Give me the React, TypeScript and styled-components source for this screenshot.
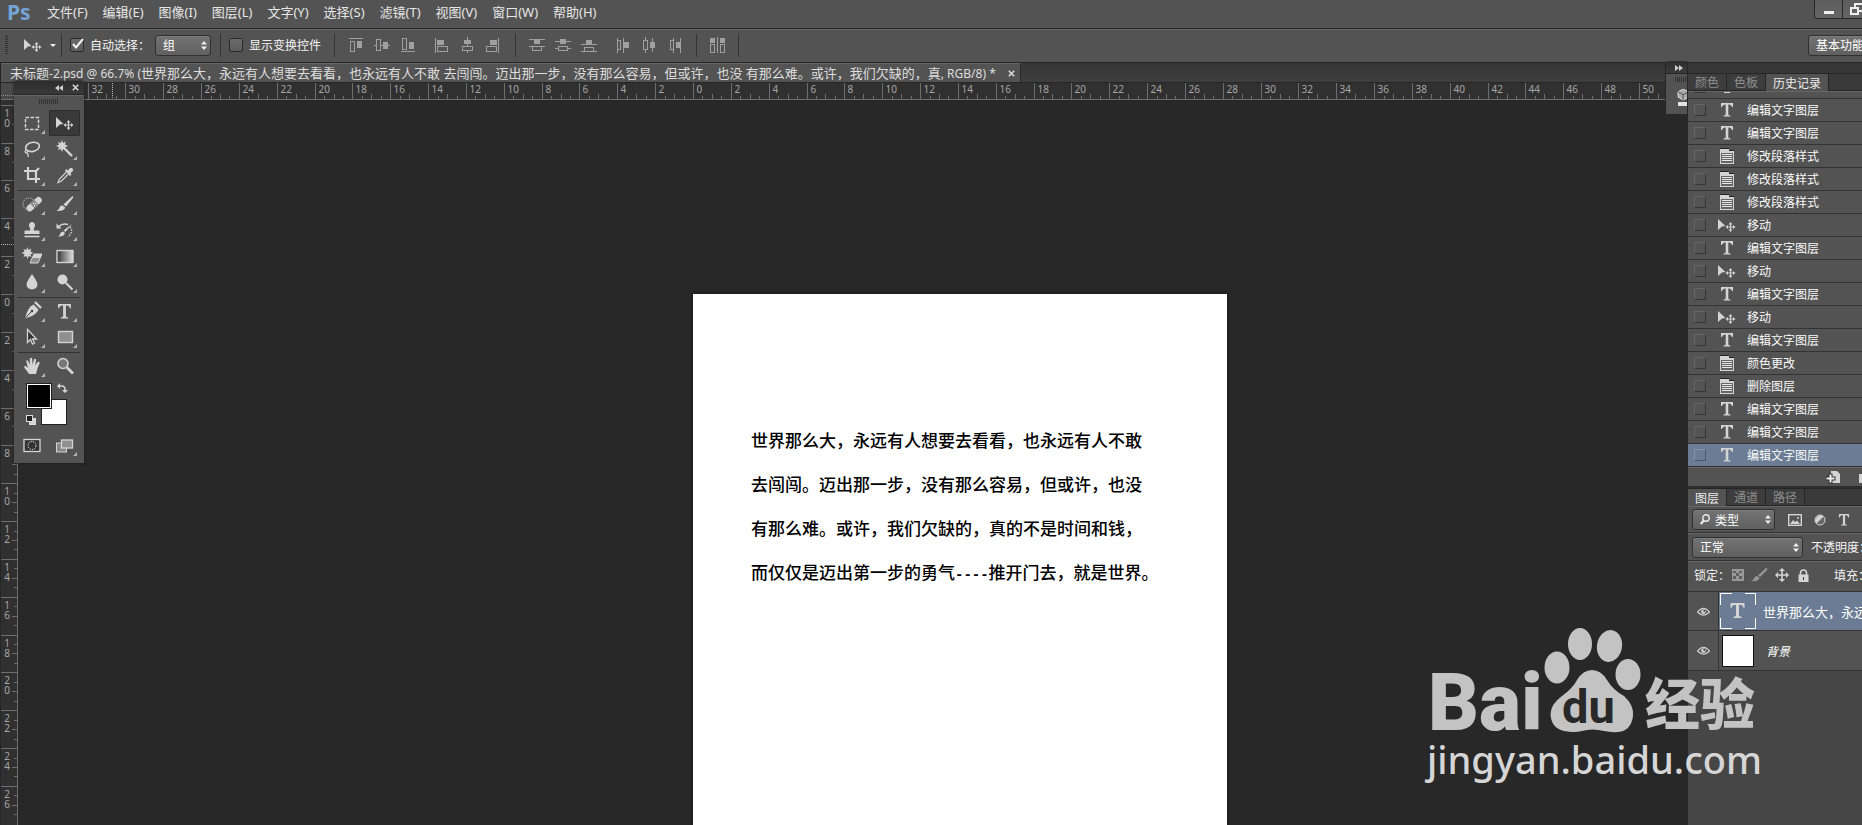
import React from "react";
import styled, { createGlobalStyle, css } from "styled-components";

const ui = `"Noto Sans", "Noto Sans CJK SC", sans-serif`;
const cjk = `"Noto Sans CJK SC", sans-serif`;

const c = {
  panel: "#535353",
  dark: "#282828",
  ruler: "#303030",
  tick: "#6e6e6e",
  line: "#333333",
  edge: "#262626",
  hi: "#666666",
  icon: "#d4d4d4",
  dim: "#989898",
  blue: "#6b7c94",
};

const Global = createGlobalStyle`
  *, *::before, *::after { box-sizing: border-box; }
  html, body { margin: 0; background: ${c.dark}; }
  body { font-family: ${ui}; font-size: 13px; color: #e6e6e6; overflow: hidden; }
  button, select, input { font: inherit; color: inherit; margin: 0; }
  button { padding: 0; border: 0; background: none; display: block; }
  ul { margin: 0; padding: 0; list-style: none; }
  svg { display: block; flex: none; }
`;

const Shell = styled.div`
  display: flex;
  flex-direction: column;
  height: 100vh;
  overflow: hidden;
  background: ${c.panel};
`;

/* ---------- menu bar ---------- */

const MenuBar = styled.header`
  display: flex;
  align-items: center;
  height: 29px;
  flex: none;
  padding-left: 7px;
  border-bottom: 1px solid ${c.edge};
  white-space: nowrap;
`;
const Logo = styled.span`
  width: 40px;
  height: 28px;
  font: 700 21px/25px "Noto Sans", sans-serif;
  color: #74a5d6;
`;
const MenuList = styled.nav`
  display: flex;
  gap: 15px;
  height: 28px;
`;
const MenuButton = styled.button`
  height: 28px;
  padding-bottom: 4px;
  line-height: 24px;
`;
const WindowControls = styled.div`
  display: flex;
  align-self: flex-start;
  width: 48px;
  height: 19px;
  margin-left: auto;
  overflow: hidden;
  border: 1px solid ${c.edge};
  border-width: 0 0 1px 1px;
  border-radius: 0 0 0 3px;
`;
const WindowButton = styled.button`
  flex: none;
  width: 28px;
  height: 18px;
  display: grid;
  place-items: center;
  background: linear-gradient(#5c5c5c, #656565);
  border-right: 1px solid ${c.edge};
`;

/* ---------- options bar ---------- */

const OptionsBar = styled.div`
  display: flex;
  align-items: center;
  height: 34px;
  flex: none;
  padding: 0 0 2px 5px;
  border-top: 1px solid ${c.hi};
  border-bottom: 1px solid ${c.edge};
  font-family: ${cjk};
  font-size: 12px;
  color: #f4f4f4;
  white-space: nowrap;
`;
const Grip = styled.i<{ $row?: boolean }>`
  display: block;
  flex: none;
  ${(p) =>
    p.$row
      ? css`
          width: 20px;
          height: 5px;
          background: repeating-linear-gradient(90deg, #333 0 1px, transparent 1px 2px);
        `
      : css`
          width: 3px;
          height: 20px;
          background: repeating-linear-gradient(#333 0 1px, transparent 1px 2px);
        `}
`;
const CurrentTool = styled.button`
  display: flex;
  align-items: center;
  gap: 8px;
  width: 53px;
  padding-left: 16px;
`;
const Divider = styled.i`
  flex: none;
  width: 1px;
  height: 23px;
  background: ${c.line};
`;
const Check = styled.label`
  display: flex;
  align-items: center;
  gap: 6px;
  margin-left: 8px;
  line-height: 20px;
`;
const CheckBox = styled.span`
  position: relative;
  width: 14px;
  height: 14px;
  input {
    appearance: none;
    display: block;
    width: 14px;
    height: 14px;
    border: 1px solid #2b2b2b;
    border-radius: 2px;
    background: linear-gradient(#6a6a6a, #5c5c5c);
  }
  svg {
    position: absolute;
    left: 1px;
    top: 0;
    pointer-events: none;
  }
`;
const SelectWrap = styled.span<{ $w: number }>`
  position: relative;
  flex: none;
  display: block;
  width: ${(p) => p.$w}px;
  height: 21px;
  svg {
    position: absolute;
    top: 6px;
    right: 4px;
    pointer-events: none;
  }
`;
const SelectBox = styled.select<{ $pad?: number }>`
  appearance: none;
  display: block;
  width: 100%;
  height: 21px;
  padding: 0 0 0 ${(p) => p.$pad ?? 7}px;
  border: 1px solid #303030;
  border-radius: 3px;
  box-shadow: inset 0 1px 0 #7c7c7c;
  background: linear-gradient(#737373, #606060);
  font: 12px/18px ${cjk};
  color: #fff;
`;
const SearchGlass = styled.svg`
  && {
    left: 8px;
    top: 5px;
  }
`;
const AlignGroup = styled.div<{ $lead: number }>`
  display: flex;
  margin-left: ${(p) => p.$lead}px;
`;
const AlignButton = styled.button`
  width: 26px;
  height: 20px;
  display: grid;
  place-items: center;
`;
const Workspace = styled.div`
  width: 54px;
  margin-left: auto;
  overflow: hidden;
`;

/* ---------- work area ---------- */

const Work = styled.div`
  flex: 1;
  min-height: 0;
  display: grid;
  grid-template-columns: minmax(0, 1fr) 175px;
`;
const DocArea = styled.main`
  position: relative;
  display: flex;
  flex-direction: column;
  min-width: 0;
  min-height: 0;
  border-left: 1px solid ${c.edge};
`;
const TabStrip = styled.div`
  display: flex;
  flex: none;
  height: 20px;
  background: linear-gradient(#353535, #3e3e3e);
  border-bottom: 1px solid ${c.edge};
`;
const DocTab = styled.div`
  display: flex;
  align-items: center;
  gap: 12px;
  padding: 0 4px 0 9px;
  background: ${c.panel};
  border-top: 1px solid ${c.hi};
  border-right: 1px solid #2a2a2a;
  line-height: 18px;
  white-space: nowrap;
  color: #dedede;
`;
const Latin = styled.span`
  font-size: 12px;
`;
const CloseButton = styled.button`
  width: 8px;
  height: 8px;
`;
const RulerRow = styled.div`
  display: flex;
  flex: none;
  height: 17px;
  background: ${c.ruler};
  border-bottom: 1px solid ${c.tick};
`;
const RulerCorner = styled.div`
  flex: none;
  width: 17px;
  height: 16px;
  padding-top: 12px;
  background: #4a4a4a;
  &::after {
    content: "";
    display: block;
    border-top: 1px dotted #8a8a8a;
  }
`;
const HRulerSvg = styled.svg`
  flex: 1;
  min-width: 0;
  height: 16px;
`;
const CanvasRow = styled.div`
  display: flex;
  flex: 1;
  min-height: 0;
`;
const VRulerSvg = styled.svg`
  width: 17px;
  height: 100%;
  background: ${c.ruler};
  border-right: 1px solid ${c.tick};
`;
const Canvas = styled.div`
  flex: 1;
  min-width: 0;
  overflow: hidden;
  padding: 194px 0 0 675px;
  background: ${c.dark};
`;
const Page = styled.article`
  width: 534px;
  height: 100%;
  padding: 124px 0 0 58px;
  background: #fff;
  color: #000;
  box-shadow: 0 0 4px #111;
  font: 500 17px/44px ${cjk};
  white-space: nowrap;
  p {
    margin: 0;
  }
`;
const Dashes = styled.span`
  font-family: "Liberation Mono", monospace;
  font-size: 14px;
  font-weight: 700;
`;

/* ---------- toolbox ---------- */

const Toolbox = styled.aside`
  position: absolute;
  left: 13px;
  top: 18px;
  width: 70px;
  padding-bottom: 5px;
  background: ${c.panel};
  border-radius: 3px 3px 0 0;
  box-shadow: 0 0 3px #1a1a1a;
`;
const ToolboxHead = styled.div`
  display: flex;
  justify-content: flex-end;
  align-items: center;
  gap: 9px;
  height: 14px;
  padding-right: 5px;
  border-radius: 3px 3px 0 0;
  background: linear-gradient(#2c2c2c, #3a3a3a);
  border-bottom: 1px solid ${c.edge};
`;
const GripRow = styled.div`
  display: grid;
  justify-content: center;
  height: 15px;
  padding-top: 3px;
  border-top: 1px solid ${c.hi};
`;
const ToolGrid = styled.div`
  display: grid;
  grid-template-columns: 33px 31px;
  column-gap: 1px;
  padding: 0 4px 0 1px;
`;
const ToolButton = styled.button<{ $on?: boolean }>`
  position: relative;
  height: 26px;
  display: grid;
  place-items: center;
  border-radius: 2px;
  ${(p) =>
    p.$on &&
    css`
      background: #393939;
      box-shadow: inset 0 0 0 1px #2c2c2c;
    `}
  &[data-more]::after {
    content: "";
    position: absolute;
    right: 3px;
    bottom: 2px;
    border: 2px solid #b4b4b4;
    border-top-color: transparent;
    border-left-color: transparent;
  }
`;
const ToolRule = styled.i`
  display: block;
  height: 1px;
  margin: 2px 4px 0;
  background: ${c.line};
`;
const Colors = styled.div`
  height: 53px;
  padding: 4px 0 0 12px;
`;

/* ---------- collapsed icon dock ---------- */

const IconDock = styled.aside`
  position: absolute;
  right: 0;
  top: -2px;
  width: 22px;
  height: 53px;
  overflow: hidden;
  background: ${c.panel};
  border-left: 1px solid ${c.edge};
  border-radius: 3px 0 0 0;
`;
const IconDockHead = styled.div`
  height: 13px;
  padding: 4px 0 0 9px;
  background: linear-gradient(#2e2e2e, #3a3a3a);
  border-bottom: 1px solid ${c.edge};
`;
const IconDockBody = styled.div`
  display: flex;
  flex-direction: column;
  gap: 7px;
  padding: 3px 0 0 9px;
`;

/* ---------- right dock ---------- */

const Dock = styled.aside`
  display: flex;
  flex-direction: column;
  min-width: 0;
  overflow: hidden;
  border-left: 1px solid ${c.edge};
  background: #464646;
  font-family: ${cjk};
  font-size: 12px;
  white-space: nowrap;
`;
const DockHead = styled.div`
  flex: none;
  height: 10px;
  background: #373737;
`;
const PanelTabs = styled.div`
  display: flex;
  flex: none;
  height: 18px;
  background: #3a3a3a;
  border-top: 1px solid ${c.edge};
  border-bottom: 1px solid ${c.edge};
`;
const PanelTab = styled.button<{ $on?: boolean }>`
  padding: 0 7px;
  height: ${(p) => (p.$on ? 17 : 16)}px;
  line-height: 16px;
  border-right: 1px solid ${c.edge};
  color: #8e8e8e;
  background: #3d3d3d;
  ${(p) =>
    p.$on &&
    css`
      color: #ececec;
      background: ${c.panel};
    `}
`;
const History = styled.ul`
  flex: none;
  background: ${c.panel};
  border-top: 1px solid ${c.hi};
`;
const HistoryPeek = styled.li`
  display: flex;
  gap: 18px;
  height: 7px;
  padding-left: 6px;
  border-bottom: 1px solid ${c.line};
  i {
    width: 12px;
    height: 1px;
    background: ${c.line};
  }
  i + i {
    width: 6px;
    background: ${c.icon};
  }
`;
const HistoryRow = styled.li<{ $on?: boolean }>`
  display: flex;
  align-items: center;
  height: 23px;
  padding: 0 0 0 6px;
  border-bottom: 1px solid ${c.line};
  color: #fafafa;
  background: ${(p) => (p.$on ? c.blue : "transparent")};
  input {
    appearance: none;
    width: 12px;
    height: 12px;
    border: 1px solid;
    border-color: ${(p) => (p.$on ? "#8593a8 #4b5869 #4b5869 #8593a8" : "#666 #363636 #363636 #666")};
  }
`;
const HistoryIcon = styled.span`
  display: grid;
  place-items: center;
  width: 41px;
`;
const HistoryLabel = styled.button`
  line-height: 20px;
`;
const HistoryFoot = styled.div`
  display: flex;
  flex: none;
  align-items: center;
  gap: 18px;
  height: 19px;
  padding-left: 138px;
  background: ${c.panel};
  border-top: 1px solid ${c.hi};
`;
const PanelGap = styled.i`
  flex: none;
  height: 2px;
  background: #2e2e2e;
`;
const Row = styled.div<{ $h: number; $bottom?: number }>`
  display: flex;
  flex: none;
  align-items: center;
  height: ${(p) => p.$h}px;
  padding: 0 0 ${(p) => p.$bottom ?? 0}px 4px;
  background: ${c.panel};
  border-top: 1px solid ${c.hi};
  border-bottom: 1px solid ${c.line};
  color: #f4f4f4;
`;
const FilterButtons = styled.div`
  display: flex;
  gap: 12px;
  margin-left: 13px;
`;
const FieldText = styled.span<{ $lead: number }>`
  flex: none;
  margin-left: ${(p) => p.$lead}px;
  line-height: 20px;
`;
const LockButtons = styled.div`
  display: flex;
  flex: none;
  align-items: center;
  gap: 7px;
  width: 82px;
  margin-left: 2px;
`;
const LayerList = styled.ul`
  flex: none;
  background: ${c.panel};
`;
const LayerRow = styled.li<{ $on?: boolean }>`
  display: flex;
  height: ${(p) => (p.$on ? 39 : 40)}px;
  border-bottom: 1px solid ${c.line};
  color: #fff;
`;
const EyeButton = styled.button`
  flex: none;
  display: grid;
  place-items: center;
  width: 31px;
  border-right: 1px solid ${c.line};
`;
const LayerBody = styled.div<{ $on?: boolean }>`
  display: flex;
  flex: 1;
  align-items: center;
  gap: ${(p) => (p.$on ? 7 : 12)}px;
  padding-left: ${(p) => (p.$on ? 1 : 3)}px;
  font-size: ${(p) => (p.$on ? 13 : 12)}px;
  background: ${(p) => (p.$on ? c.blue : "transparent")};
`;
const Thumb = styled.i`
  flex: none;
  width: 32px;
  height: 32px;
  border: 1px solid #111;
  background: #fff;
`;
const Italic = styled.em`
  font-style: italic;
`;

/* ---------- watermark ---------- */

const Watermark = styled.div`
  position: absolute;
  right: 100px;
  bottom: 34px;
  pointer-events: none;
  color: #c3c3c3;
  white-space: nowrap;
`;
const Brand = styled.div`
  display: flex;
  align-items: flex-end;
  height: 104px;
  padding-left: 1px;
`;
const Bai = styled.span`
  width: 116px;
  margin-bottom: 2px;
  font: 900 79px/56px Roboto, sans-serif;
`;
const Exp = styled.span`
  margin: 0 0 5px 4px;
  font: 900 55px/56px ${cjk};
`;
const Url = styled.div`
  padding-bottom: 6px;
  font: 500 38px/52px "Noto Sans", sans-serif;
  color: #d6d6d6;
`;

/* ---------- icons ---------- */

const FourWay = ({ x, y }: { x: number; y: number }) => (
  <path
    transform={`translate(${x} ${y})`}
    d="M0-5 2-2.500H.6V-.6H2.500V-2L5 0 2.500 2V.6H.6V2.500H2L0 5-2 2.500H-.6V.6H-2.500V2L-5 0-2.500-2V-.6H-.6V-2.500H-2Z"
    fill={c.icon}
  />
);
const MoveIcon = () => (
  <svg width="18" height="15" viewBox="0 0 18 15">
    <path d="M0 1 7.500 8 4 8.500 0 12Z" fill={c.icon} />
    <FourWay x={12.5} y={9} />
  </svg>
);
const TIcon = ({ s = 14 }: { s?: number }) => (
  <svg width={s} height={s} viewBox="0 0 14 14">
    <path d="M1 0H13V4H12Q11.500 1.500 9 1.500H8.300V11.500Q8.300 12.500 10.500 12.600V13.500H3.500V12.600Q5.700 12.500 5.700 11.500V1.500H5Q2.500 1.500 2 4H1Z" fill={c.icon} />
  </svg>
);
const DocIcon = () => (
  <svg width="14" height="16" viewBox="0 0 14 16" shapeRendering="crispEdges">
    <path d="M0 1H9V3H14V16H0Z" fill={c.icon} />
    <path d="M1 5H13V15H1Z" fill="#666" />
    <path d="M2 6.500H12M2 8.500H12M2 10.500H12M2 12.500H12" stroke="#e8e8e8" />
    <path d="M0 .5H9M9 2.500H14" stroke="#222" />
  </svg>
);
const Updown = () => (
  <svg width="6" height="9" viewBox="0 0 6 9">
    <path d="M3 0 6 3.500H0ZM3 9 6 5.500H0Z" fill="#f0f0f0" />
  </svg>
);
const XIcon = () => (
  <svg width="7" height="7" viewBox="0 0 7 7">
    <path d="M.8.8 6.200 6.200M6.200.8.8 6.200" stroke="#d8d8d8" strokeWidth="1.600" />
  </svg>
);
const Chevrons = ({ left }: { left?: boolean }) => (
  <svg width="8" height="6" viewBox="0 0 8 6">
    <path d={left ? "M4 0V6L0 3ZM8 0V6L4 3Z" : "M0 0V6L4 3ZM4 0V6L8 3Z"} fill="#d0d0d0" />
  </svg>
);

const L = "#a0a0a0";
const Solid = (p: { x: number; y: number; w: number; h: number }) => (
  <rect x={p.x} y={p.y} width={p.w} height={p.h} fill={L} stroke="none" />
);
const alignArt: Record<string, React.ReactNode> = {
  top: (<><path d="M1 1.500H15M2.500 4.500H6.500V14.500H2.500Z" /><Solid x={9} y={4} w={5} h={7} /></>),
  vmid: (<><path d="M2.500 2.500H6.500V13.500H2.500ZM0 8.500H2M7 8.500H16" /><Solid x={9} y={5} w={5} h={7} /></>),
  bottom: (<><path d="M1 14.500H15M2.500 1.500H6.500V12.500H2.500Z" /><Solid x={9} y={5} w={5} h={7} /></>),
  left: (<><path d="M2.500 1V16M4.500 9.500H14.500V14.500H4.500Z" /><Solid x={4} y={3} w={7} h={5} /></>),
  hmid: (<><path d="M8.500 0V9M8.500 14V16M3.500 9.500H13.500V13.500H3.500Z" /><Solid x={5} y={3} w={7} h={4} /></>),
  right: (<><path d="M13.500 1V16M1.500 9.500H11.500V14.500H1.500Z" /><Solid x={5} y={3} w={7} h={5} /></>),
  dTop: (<><path d="M0 2.500H16M0 9.500H16M3.500 10V13.500H12.500V10" /><Solid x={5} y={3} w={6} h={4} /></>),
  dMid: (<><path d="M0 4.500H16M0 11.500H4M12 11.500H16M3.500 9.500H12.500V13.500H3.500Z" /><Solid x={5} y={2} w={6} h={5} /></>),
  dBot: (<><path d="M0 7.500H16M0 14.500H16M3.500 14V10.500H12.500V14" /><Solid x={5} y={3} w={6} h={4} /></>),
  dLeft: (<><path d="M2.500 1V16M8.500 1V16M2.500 3.500H5.500V12.500H2.500" /><Solid x={9} y={5} w={5} h={6} /></>),
  dHmid: (<><path d="M4.500 0V3M4.500 13V16M2.500 3.500H6.500V12.500H2.500ZM11.500 1V15" /><Solid x={9} y={5} w={5} h={6} /></>),
  dRight: (<><path d="M6.500 1V16M13.500 1V16M6.500 3.500H3.500V12.500H6.500" /><Solid x={9} y={5} w={4} h={6} /></>),
  auto: (<><path d="M8.500 0V16M1.500 7.500H5.500V15.500H1.500ZM11.500 7.500H15.500V15.500H11.500Z" /><Solid x={1} y={1} w={5} h={5} /><Solid x={11} y={1} w={5} h={5} /></>),
};
const alignNames: Record<string, string> = {
  top: "顶对齐", vmid: "垂直居中对齐", bottom: "底对齐", left: "左对齐", hmid: "水平居中对齐", right: "右对齐",
  dTop: "按顶分布", dMid: "垂直居中分布", dBot: "按底分布", dLeft: "按左分布", dHmid: "水平居中分布", dRight: "按右分布", auto: "自动对齐",
};
const Aligns = ({ ids, lead }: { ids: string[]; lead: number }) => (
  <AlignGroup $lead={lead}>
    {ids.map((id) => (
      <AlignButton key={id} aria-label={alignNames[id]}>
        <svg width="17" height="16" viewBox="0 0 17 16" fill="none" stroke={L} shapeRendering="crispEdges">
          {alignArt[id]}
        </svg>
      </AlignButton>
    ))}
  </AlignGroup>
);

const Star = ({ x, y }: { x: number; y: number }) => (
  <path
    transform={`translate(${x} ${y})`}
    d="M0-6 1-3 3.800-4.500 3-1.500 6 0 3 1.200 4 4 1.200 3 0 6-1.200 3-4 4-3 1.200-6 0-3-1.300-4-4-1.200-3Z"
    fill={c.icon}
  />
);
const toolArt: Record<string, React.ReactNode> = {
  marquee: <rect x="3.500" y="4.500" width="13" height="12" fill="none" stroke={c.icon} strokeWidth="1.500" strokeDasharray="3.500 1.500" />,
  lasso: (<g fill="none" stroke={c.icon} strokeWidth="1.700"><ellipse cx="10.500" cy="8" rx="7" ry="4.500" transform="rotate(-12 10 8)" /><path d="M4 11Q2 13 4 14Q6 14 5 12M4.500 14Q7 15 6 18" strokeWidth="1.200" /></g>),
  wand: (<><Star x={7} y={7} /><path d="M9 9 17 17" stroke={c.icon} strokeWidth="2.400" /></>),
  crop: <path d="M6 2V14H18M2 6H14V18M14 6 17 3" fill="none" stroke={c.icon} strokeWidth="2.200" />,
  dropper: (<><path d="M11 4 13 5.500Q15.500 1.500 17.500 3.500T15.500 8L16.500 9.500 15 11 10 6Z" fill={c.icon} /><path d="M11 7.500 4.500 14 3 17.500 6.500 16 13 9.500" fill="none" stroke={c.icon} strokeWidth="1.200" /></>),
  heal: (<><circle cx="7" cy="10" r="6" fill="none" stroke={c.icon} strokeDasharray="1.200 1.200" /><rect x="3" y="7" width="18" height="6.500" rx="3" transform="rotate(-42 12 10)" fill={c.icon} /><rect x="9.500" y="7" width="5.500" height="6.500" transform="rotate(-42 12 10)" fill="#888" /><path d="M11 9.500h1M13 9.500h1M12 11.500h1" stroke="#fff" /></>),
  brush: (<><path d="M17.500 2Q19 2.500 17.500 4.500L11 12.500 8.500 10.500Z" fill={c.icon} /><path d="M7.500 11.500 10.300 13.500Q9 17.500 1.500 17Q4 15.500 4.500 13.500Q5.500 11 7.500 11.500Z" fill={c.icon} /></>),
  stamp: (<><path d="M10 2A3.200 3.200 0 0 1 12.500 7Q11.500 8.500 11.800 10.500H16.500Q17.500 10.500 17.500 11.500V14H2.500V11.500Q2.500 10.500 3.500 10.500H8.200Q8.500 8.500 7.500 7A3.200 3.200 0 0 1 10 2Z" fill={c.icon} /><path d="M2.500 16.500H17.500" stroke={c.icon} strokeWidth="1.600" /></>),
  history: (<><path d="M17 4 10.500 12 8.500 10.500ZM8 11.500 10 13Q9 17 3 16.500Q5 15.500 5.300 13.500Q6 11.500 8 11.500Z" fill={c.icon} /><path d="M4 6.500Q7 3 13 4.500" fill="none" stroke={c.icon} strokeWidth="1.600" /><path d="M1.500 3.500 6.500 8.500H1.500Z" fill={c.icon} /><path d="M15 7Q19 11 13 17" fill="none" stroke={c.icon} strokeWidth="1.400" strokeDasharray="1.500 1.300" /></>),
  eraser: (<><Star x={5.5} y={7} /><path d="M12 8H20L16 17H8Z" fill="#8f8f8f" stroke={c.icon} /><path d="M12 8H20L18 12H10.500Z" fill={c.icon} /></>),
  gradient: (<><defs><linearGradient id="tg"><stop offset="0" stopColor="#333" /><stop offset="1" stopColor="#ddd" /></linearGradient></defs><rect x="2" y="4.500" width="16" height="12" fill="url(#tg)" stroke={c.icon} strokeWidth="1.400" /></>),
  blur: <path d="M10 2Q15.500 10 15.500 12.500A5.500 5 0 0 1 4.500 12.500Q4.500 10 10 2Z" fill={c.icon} />,
  dodge: (<><circle cx="7.500" cy="7.500" r="5" fill={c.icon} /><path d="M11 11 17.500 17.500" stroke={c.icon} strokeWidth="2.200" /></>),
  pen: (<><path d="M11.500 3.500 16.500 8.500Q15 14 3 17.500Q6 5.500 11.500 3.500Z" fill={c.icon} /><path d="M13 1 19 7" stroke={c.icon} strokeWidth="2.400" /><path d="M3 17.500 9.500 10.500" stroke="#444" /><circle cx="10" cy="10" r="1.300" fill="#444" /></>),
  path: <path d="M5.500 2.500V15.500L8.500 12.500 10.500 17 12.500 16 10.500 12H14.500Z" fill="#333" stroke={c.icon} strokeWidth="1.300" />,
  shape: <rect x="3.500" y="4.500" width="14" height="11" fill="#8f8f8f" stroke={c.icon} strokeWidth="1.400" />,
  hand: <path d="M7 18Q5 15 2.500 12Q1.500 10 3 9.800Q4.500 10 6 12L4.300 5.500Q4.300 4 5.500 4.200Q6.300 4.500 7.800 9L7.800 3Q8 1.800 9 1.800Q10 1.800 10.200 3L10.600 8.800 12 3.500Q12.500 2.500 13.400 2.800Q14.200 3.200 14 4.200L13.200 9.500 15.500 6.200Q16.500 5.200 17.400 6Q18 6.800 17.400 7.800Q15.500 11.500 14 18Z" fill={c.icon} />,
  zoom: (<><circle cx="8" cy="7.500" r="5" fill="#777" stroke={c.icon} strokeWidth="1.600" /><path d="M12 11.500 18 17.500" stroke={c.icon} strokeWidth="2.800" /></>),
  mask: (<><rect x="2" y="4.500" width="16" height="12" fill="#333" stroke={c.icon} strokeWidth="1.300" /><circle cx="10" cy="10.500" r="4" fill="none" stroke="#fff" strokeDasharray="1.200 1.200" /></>),
  screen: (<><rect x="1.500" y="8" width="10" height="9" fill="#888" stroke={c.icon} /><rect x="6.500" y="5" width="11" height="8" fill="#8f8f8f" stroke={c.icon} strokeWidth="1.300" /></>),
};
const toolNames: Record<string, string> = {
  marquee: "矩形选框工具", move: "移动工具", lasso: "套索工具", wand: "魔棒工具", crop: "裁剪工具", dropper: "吸管工具",
  heal: "修复画笔工具", brush: "画笔工具", stamp: "仿制图章工具", history: "历史记录画笔工具", eraser: "橡皮擦工具",
  gradient: "渐变工具", blur: "模糊工具", dodge: "减淡工具", pen: "钢笔工具", type: "文字工具", path: "路径选择工具",
  shape: "矩形工具", hand: "抓手工具", zoom: "缩放工具", mask: "快速蒙版", screen: "屏幕模式",
};
const single = ["move", "zoom", "mask"];
const Tools = ({ ids }: { ids: string[] }) => (
  <ToolGrid>
    {ids.map((id) => (
      <ToolButton key={id} aria-label={toolNames[id]} $on={id === "move"} data-more={single.includes(id) ? undefined : ""}>
        {id === "move" ? <MoveIcon /> : id === "type" ? <TIcon s={15} /> : (
          <svg width="20" height="20" viewBox="0 0 20 20">{toolArt[id]}</svg>
        )}
      </ToolButton>
    ))}
  </ToolGrid>
);

/* ---------- rulers ---------- */

const STEP = 37.84;
const range = (a: number, b: number) => Array.from({ length: b - a + 1 }, (_, i) => a + i);

const HRuler = ({ zero }: { zero: number }) => (
  <HRulerSvg fill="#a6a6a6" fontSize="10" fontFamily="Noto Sans">
    {range(-16, 25).map((n) => {
      const at = (q: number) => Math.round(zero + (n + q / 4) * STEP) + 0.5;
      return (
        <g key={n}>
          <path d={`M${at(0)} 0V16M${at(1)} 13V16M${at(2)} 11V16M${at(3)} 13V16`} stroke={c.tick} />
          <text x={at(0) + 3} y="10">{Math.abs(n * 2)}</text>
        </g>
      );
    })}
    <path d="M94.500 0V16" stroke="#bbb" strokeDasharray="1 1" />
  </HRulerSvg>
);
const VRuler = ({ zero }: { zero: number }) => (
  <VRulerSvg fill="#a6a6a6" fontSize="10" fontFamily="Noto Sans" textAnchor="middle">
    {range(-5, 13).map((n) => {
      const at = (q: number) => Math.round(zero + (n + q / 4) * STEP) + 0.5;
      return (
        <g key={n}>
          <path d={`M0 ${at(0)}H16M13 ${at(1)}H16M11 ${at(2)}H16M13 ${at(3)}H16`} stroke={c.tick} />
          {String(Math.abs(n * 2)).split("").map((d, i) => (
            <text key={i} x="6" y={at(0) + 11 + i * 10}>{d}</text>
          ))}
        </g>
      );
    })}
    <path d="M0 144.500H16" stroke="#bbb" strokeDasharray="1 1" />
  </VRulerSvg>
);

/* ---------- data ---------- */

const menus = ["文件(F)", "编辑(E)", "图像(I)", "图层(L)", "文字(Y)", "选择(S)", "滤镜(T)", "视图(V)", "窗口(W)", "帮助(H)"];

type Kind = "text" | "doc" | "move";
const history: [Kind, string][] = [
  ["text", "编辑文字图层"],
  ["text", "编辑文字图层"],
  ["doc", "修改段落样式"],
  ["doc", "修改段落样式"],
  ["doc", "修改段落样式"],
  ["move", "移动"],
  ["text", "编辑文字图层"],
  ["move", "移动"],
  ["text", "编辑文字图层"],
  ["move", "移动"],
  ["text", "编辑文字图层"],
  ["doc", "颜色更改"],
  ["doc", "删除图层"],
  ["text", "编辑文字图层"],
  ["text", "编辑文字图层"],
  ["text", "编辑文字图层"],
];
const kindIcon: Record<Kind, React.ReactNode> = { text: <TIcon />, doc: <DocIcon />, move: <MoveIcon /> };

const Eye = () => (
  <svg width="13" height="9" viewBox="0 0 13 9">
    <path d="M.5 5Q6.500-2.500 12.500 5Q6.500 11 .5 5Z" fill="none" stroke={c.icon} strokeWidth="1.200" />
    <circle cx="6.500" cy="4.600" r="2.400" fill={c.icon} />
    <circle cx="7.200" cy="4" r=".9" fill="#333" />
  </svg>
);

export default function App() {
  return (
    <Shell>
      <Global />
      <MenuBar>
        <Logo>Ps</Logo>
        <MenuList>
          {menus.map((m) => (
            <MenuButton key={m}>{m}</MenuButton>
          ))}
        </MenuList>
        <WindowControls>
          <WindowButton aria-label="最小化">
            <svg width="10" height="12"><path d="M0 8H10V11H0Z" fill="#f0f0f0" /></svg>
          </WindowButton>
          <WindowButton aria-label="还原">
            <svg width="14" height="12" fill="none" stroke="#eee" strokeWidth="2">
              <path d="M5 4V1H13V8H9M1 5H8V11H1Z" />
            </svg>
          </WindowButton>
        </WindowControls>
      </MenuBar>

      <OptionsBar>
        <Grip />
        <CurrentTool aria-label="移动工具">
          <MoveIcon />
          <svg width="6" height="3"><path d="M0 0H6L3 3Z" fill="#eee" /></svg>
        </CurrentTool>
        <Divider />
        <Check>
          <CheckBox>
            <input type="checkbox" defaultChecked />
            <svg width="14" height="12" viewBox="0 0 14 12"><path d="M2 6 5 9.500 12 1" fill="none" stroke="#f2f2f2" strokeWidth="2" /></svg>
          </CheckBox>
          自动选择：
        </Check>
        <AlignGroup $lead={5}>
          <SelectWrap $w={56}>
            <SelectBox aria-label="自动选择"><option>组</option></SelectBox>
            <Updown />
          </SelectWrap>
        </AlignGroup>
        <AlignGroup $lead={9}><Divider /></AlignGroup>
        <Check>
          <CheckBox><input type="checkbox" /></CheckBox>
          显示变换控件
        </Check>
        <AlignGroup $lead={13}><Divider /></AlignGroup>
        <Aligns lead={8} ids={["top", "vmid", "bottom"]} />
        <Aligns lead={7} ids={["left", "hmid", "right"]} />
        <AlignGroup $lead={9}><Divider /></AlignGroup>
        <Aligns lead={8} ids={["dTop", "dMid", "dBot"]} />
        <Aligns lead={8} ids={["dLeft", "dHmid", "dRight"]} />
        <AlignGroup $lead={8}><Divider /></AlignGroup>
        <Aligns lead={7} ids={["auto"]} />
        <AlignGroup $lead={8}><Divider /></AlignGroup>
        <Workspace>
          <SelectWrap $w={110}>
            <SelectBox aria-label="工作区"><option>基本功能</option></SelectBox>
          </SelectWrap>
        </Workspace>
      </OptionsBar>

      <Work>
        <DocArea>
          <TabStrip>
            <DocTab>
              <span>
                未标题<Latin>-2.psd @ 66.7% (</Latin>
                世界那么大，永远有人想要去看看，也永远有人不敢 去闯闯。迈出那一步，没有那么容易，但或许，也没 有那么难。或许，我们欠缺的，真
                <Latin>, RGB/8) *</Latin>
              </span>
              <CloseButton aria-label="关闭"><XIcon /></CloseButton>
            </DocTab>
          </TabStrip>
          <RulerRow>
            <RulerCorner />
            <HRuler zero={675} />
          </RulerRow>
          <CanvasRow>
            <VRuler zero={194} />
            <Canvas>
              <Page>
                <p>世界那么大，永远有人想要去看看，也永远有人不敢</p>
                <p>去闯闯。迈出那一步，没有那么容易，但或许，也没</p>
                <p>有那么难。或许，我们欠缺的，真的不是时间和钱，</p>
                <p>而仅仅是迈出第一步的勇气<Dashes>----</Dashes>推开门去，就是世界。</p>
              </Page>
            </Canvas>
          </CanvasRow>

          <Toolbox>
            <ToolboxHead>
              <button aria-label="折叠"><Chevrons left /></button>
              <button aria-label="关闭工具栏"><XIcon /></button>
            </ToolboxHead>
            <GripRow><Grip $row /></GripRow>
            <Tools ids={["marquee", "move", "lasso", "wand", "crop", "dropper"]} />
            <ToolRule />
            <Tools ids={["heal", "brush", "stamp", "history", "eraser", "gradient", "blur", "dodge"]} />
            <ToolRule />
            <Tools ids={["pen", "type", "path", "shape"]} />
            <ToolRule />
            <Tools ids={["hand", "zoom"]} />
            <Colors>
              <svg width="44" height="44" viewBox="0 0 44 44" shapeRendering="crispEdges">
                <rect x="15.500" y="16.500" width="25" height="25" fill="#fff" stroke="#222" />
                <rect x=".5" y=".5" width="25" height="25" fill="#fff" stroke="#222" />
                <rect x="2" y="2" width="22" height="22" fill="#000" />
                <rect x="3.500" y="35.500" width="6" height="6" fill={c.icon} stroke="#ddd" />
                <rect x=".5" y="32.500" width="6" height="6" fill="#222" stroke="#ddd" />
                <g shapeRendering="auto">
                  <path d="M34 3H36Q39 3 39 7V8" fill="none" stroke={c.icon} strokeWidth="1.500" />
                  <path d="M34 0V6L31 3ZM36 7H42L39 10Z" fill={c.icon} />
                </g>
              </svg>
            </Colors>
            <Tools ids={["mask", "screen"]} />
          </Toolbox>

          <IconDock>
            <IconDockHead><Chevrons /></IconDockHead>
            <IconDockBody>
              <Grip $row />
              <svg width="24" height="20" viewBox="0 0 24 20">
                <path d="M8 0 14 3V8L8 11 3 8V3Z" fill="#aaa" stroke="#ddd" />
                <path d="M3 3 8 5.500 14 3M8 5.500V11" fill="none" stroke="#555" />
                <path d="M3 13H24V17H3Z" fill="#e4e4e4" />
              </svg>
            </IconDockBody>
          </IconDock>
        </DocArea>

        <Dock>
          <DockHead />
          <PanelTabs>
            <PanelTab>颜色</PanelTab>
            <PanelTab>色板</PanelTab>
            <PanelTab $on>历史记录</PanelTab>
          </PanelTabs>
          <History>
            <HistoryPeek><i /><i /></HistoryPeek>
            {history.map(([kind, label], i) => (
              <HistoryRow key={i} $on={i === history.length - 1}>
                <input type="checkbox" aria-label={`历史画笔源 ${i + 1}`} />
                <HistoryIcon>{kindIcon[kind]}</HistoryIcon>
                <HistoryLabel>{label}</HistoryLabel>
              </HistoryRow>
            ))}
          </History>
          <HistoryFoot>
            <button aria-label="新建文档">
              <svg width="15" height="13" viewBox="0 0 15 13">
                <path d="M5 0H11L14 3V12H5Z" fill={c.icon} />
                <path d="M4.500 2.500V12.500M0 7.500H9.500" stroke="#333" strokeWidth="4" />
                <path d="M4.500 3.500V11.500M.5 7.500H8.500" stroke="#eee" strokeWidth="2" />
              </svg>
            </button>
            <button aria-label="新建快照">
              <svg width="14" height="11" viewBox="0 0 14 11"><path d="M0 2H3L4 0H9L10 2H14V11H0Z" fill={c.icon} /></svg>
            </button>
          </HistoryFoot>
          <PanelGap />
          <PanelTabs>
            <PanelTab $on>图层</PanelTab>
            <PanelTab>通道</PanelTab>
            <PanelTab>路径</PanelTab>
          </PanelTabs>
          <Row $h={27}>
            <SelectWrap $w={83}>
              <SelectBox $pad={22} aria-label="图层过滤"><option>类型</option></SelectBox>
              <Updown />
              <SearchGlass width="10" height="11" viewBox="0 0 10 11">
                <circle cx="6" cy="4" r="3.200" fill="none" stroke="#eee" strokeWidth="1.400" />
                <path d="M3.800 6.500.8 10" stroke="#eee" strokeWidth="2" />
              </SearchGlass>
            </SelectWrap>
            <FilterButtons>
              <button aria-label="像素图层">
                <svg width="14" height="12" viewBox="0 0 14 12">
                  <rect x=".7" y=".7" width="12.600" height="10.600" fill="none" stroke={c.icon} strokeWidth="1.400" />
                  <path d="M2 10 5 6 7 8 9 6.500 12 10Z" fill={c.icon} /><circle cx="10" cy="4" r="1" fill={c.icon} />
                </svg>
              </button>
              <button aria-label="调整图层">
                <svg width="12" height="12" viewBox="0 0 12 12">
                  <circle cx="6" cy="6" r="5" fill="#666" stroke={c.icon} /><path d="M2.500 9.500A5 5 0 0 1 9.500 2.500Z" fill={c.icon} />
                </svg>
              </button>
              <button aria-label="文字图层"><TIcon s={12} /></button>
            </FilterButtons>
          </Row>
          <Row $h={28}>
            <SelectWrap $w={111}>
              <SelectBox aria-label="混合模式"><option>正常</option></SelectBox>
              <Updown />
            </SelectWrap>
            <FieldText $lead={8}>不透明度：</FieldText>
          </Row>
          <Row $h={31} $bottom={3}>
            <FieldText $lead={2}>锁定：</FieldText>
            <LockButtons>
              <button aria-label="锁定透明像素">
                <svg width="12" height="12" viewBox="0 0 12 12" shapeRendering="crispEdges">
                  <path d="M0 0H12V12H0Z" fill={c.dim} />
                  <path d="M1 2h3v2h-3zM7 2h3v2h-3zM4 4h3v3h-3zM1 7h3v3h-3zM7 7h3v3h-3z" fill="#606060" />
                </svg>
              </button>
              <button aria-label="锁定图像像素">
                <svg width="17" height="14" viewBox="0 0 17 14">
                  <path d="M15 0Q17 0 16 2L9 9 7 7.500ZM6 8 8.500 10Q7 14 0 13Q3 12 3.500 9.500Q4.500 8 6 8Z" fill={c.dim} />
                </svg>
              </button>
              <button aria-label="锁定位置">
                <svg width="14" height="14" viewBox="0 0 14 14">
                  <path transform="translate(7 7)" d="M0-7 3-4H.8V-.8H4V-3L7 0 4 3V.8H.8V4H3L0 7-3 4H-.8V.8H-4V3L-7 0-4-3V-.8H-.8V-4H-3Z" fill={c.icon} />
                </svg>
              </button>
              <button aria-label="锁定全部">
                <svg width="14" height="13" viewBox="0 0 14 13">
                  <path d="M4.500 6V4A3 3 0 0 1 10.500 4V6" fill="none" stroke={c.icon} strokeWidth="1.600" />
                  <path d="M2.500 5.500H12.500V13H2.500Z" fill={c.icon} /><path d="M7 8H8V11H7Z" fill="#333" />
                </svg>
              </button>
            </LockButtons>
            <FieldText $lead={20}>填充：</FieldText>
          </Row>
          <LayerList>
            <LayerRow $on>
              <EyeButton aria-label="隐藏文字图层"><Eye /></EyeButton>
              <LayerBody $on>
                <svg width="36" height="36" viewBox="0 0 36 36">
                  <path d="M12 .5H.5V12M25 .5H35.500V12M35.500 25V35.500H25M12 35.500H.5V25" fill="none" stroke="#fff" />
                  <path transform="translate(9.500 10)" d="M1 0H15V5H14Q13.500 2 11 2H9.500V12.500Q9.500 13.500 12 13.700V15H4V13.700Q6.500 13.500 6.500 12.500V2H5Q2.500 2 2 5H1Z" fill={c.icon} />
                </svg>
                世界那么大，永远
              </LayerBody>
            </LayerRow>
            <LayerRow>
              <EyeButton aria-label="隐藏背景"><Eye /></EyeButton>
              <LayerBody>
                <Thumb />
                <Italic>背景</Italic>
              </LayerBody>
            </LayerRow>
          </LayerList>
        </Dock>
      </Work>

      <Watermark>
        <Brand>
          <Bai>Bai</Bai>
          <svg width="97" height="105" viewBox="0 0 97 105" fill="#c3c3c3">
            <ellipse cx="13" cy="39.500" rx="12.500" ry="16" />
            <ellipse cx="36" cy="16" rx="12" ry="16" />
            <ellipse cx="65.500" cy="18" rx="12.500" ry="16" transform="rotate(10 65.500 18)" />
            <ellipse cx="84" cy="46.500" rx="12.500" ry="15.500" />
            <path d="M48 42Q57 42 63 52T80 68Q90 77 89 88Q87 103 74 104Q67 104.500 60 103Q48 100 38 103Q30 105 20 103Q7 100 6.500 86Q7 76 18 68T33 52Q39 42 48 42Z" />
            <text x="18" y="95" fontFamily="Roboto" fontWeight="700" fontSize="47" fill={c.dark}>du</text>
          </svg>
          <Exp>经验</Exp>
        </Brand>
        <Url>jingyan.baidu.com</Url>
      </Watermark>
    </Shell>
  );
}
